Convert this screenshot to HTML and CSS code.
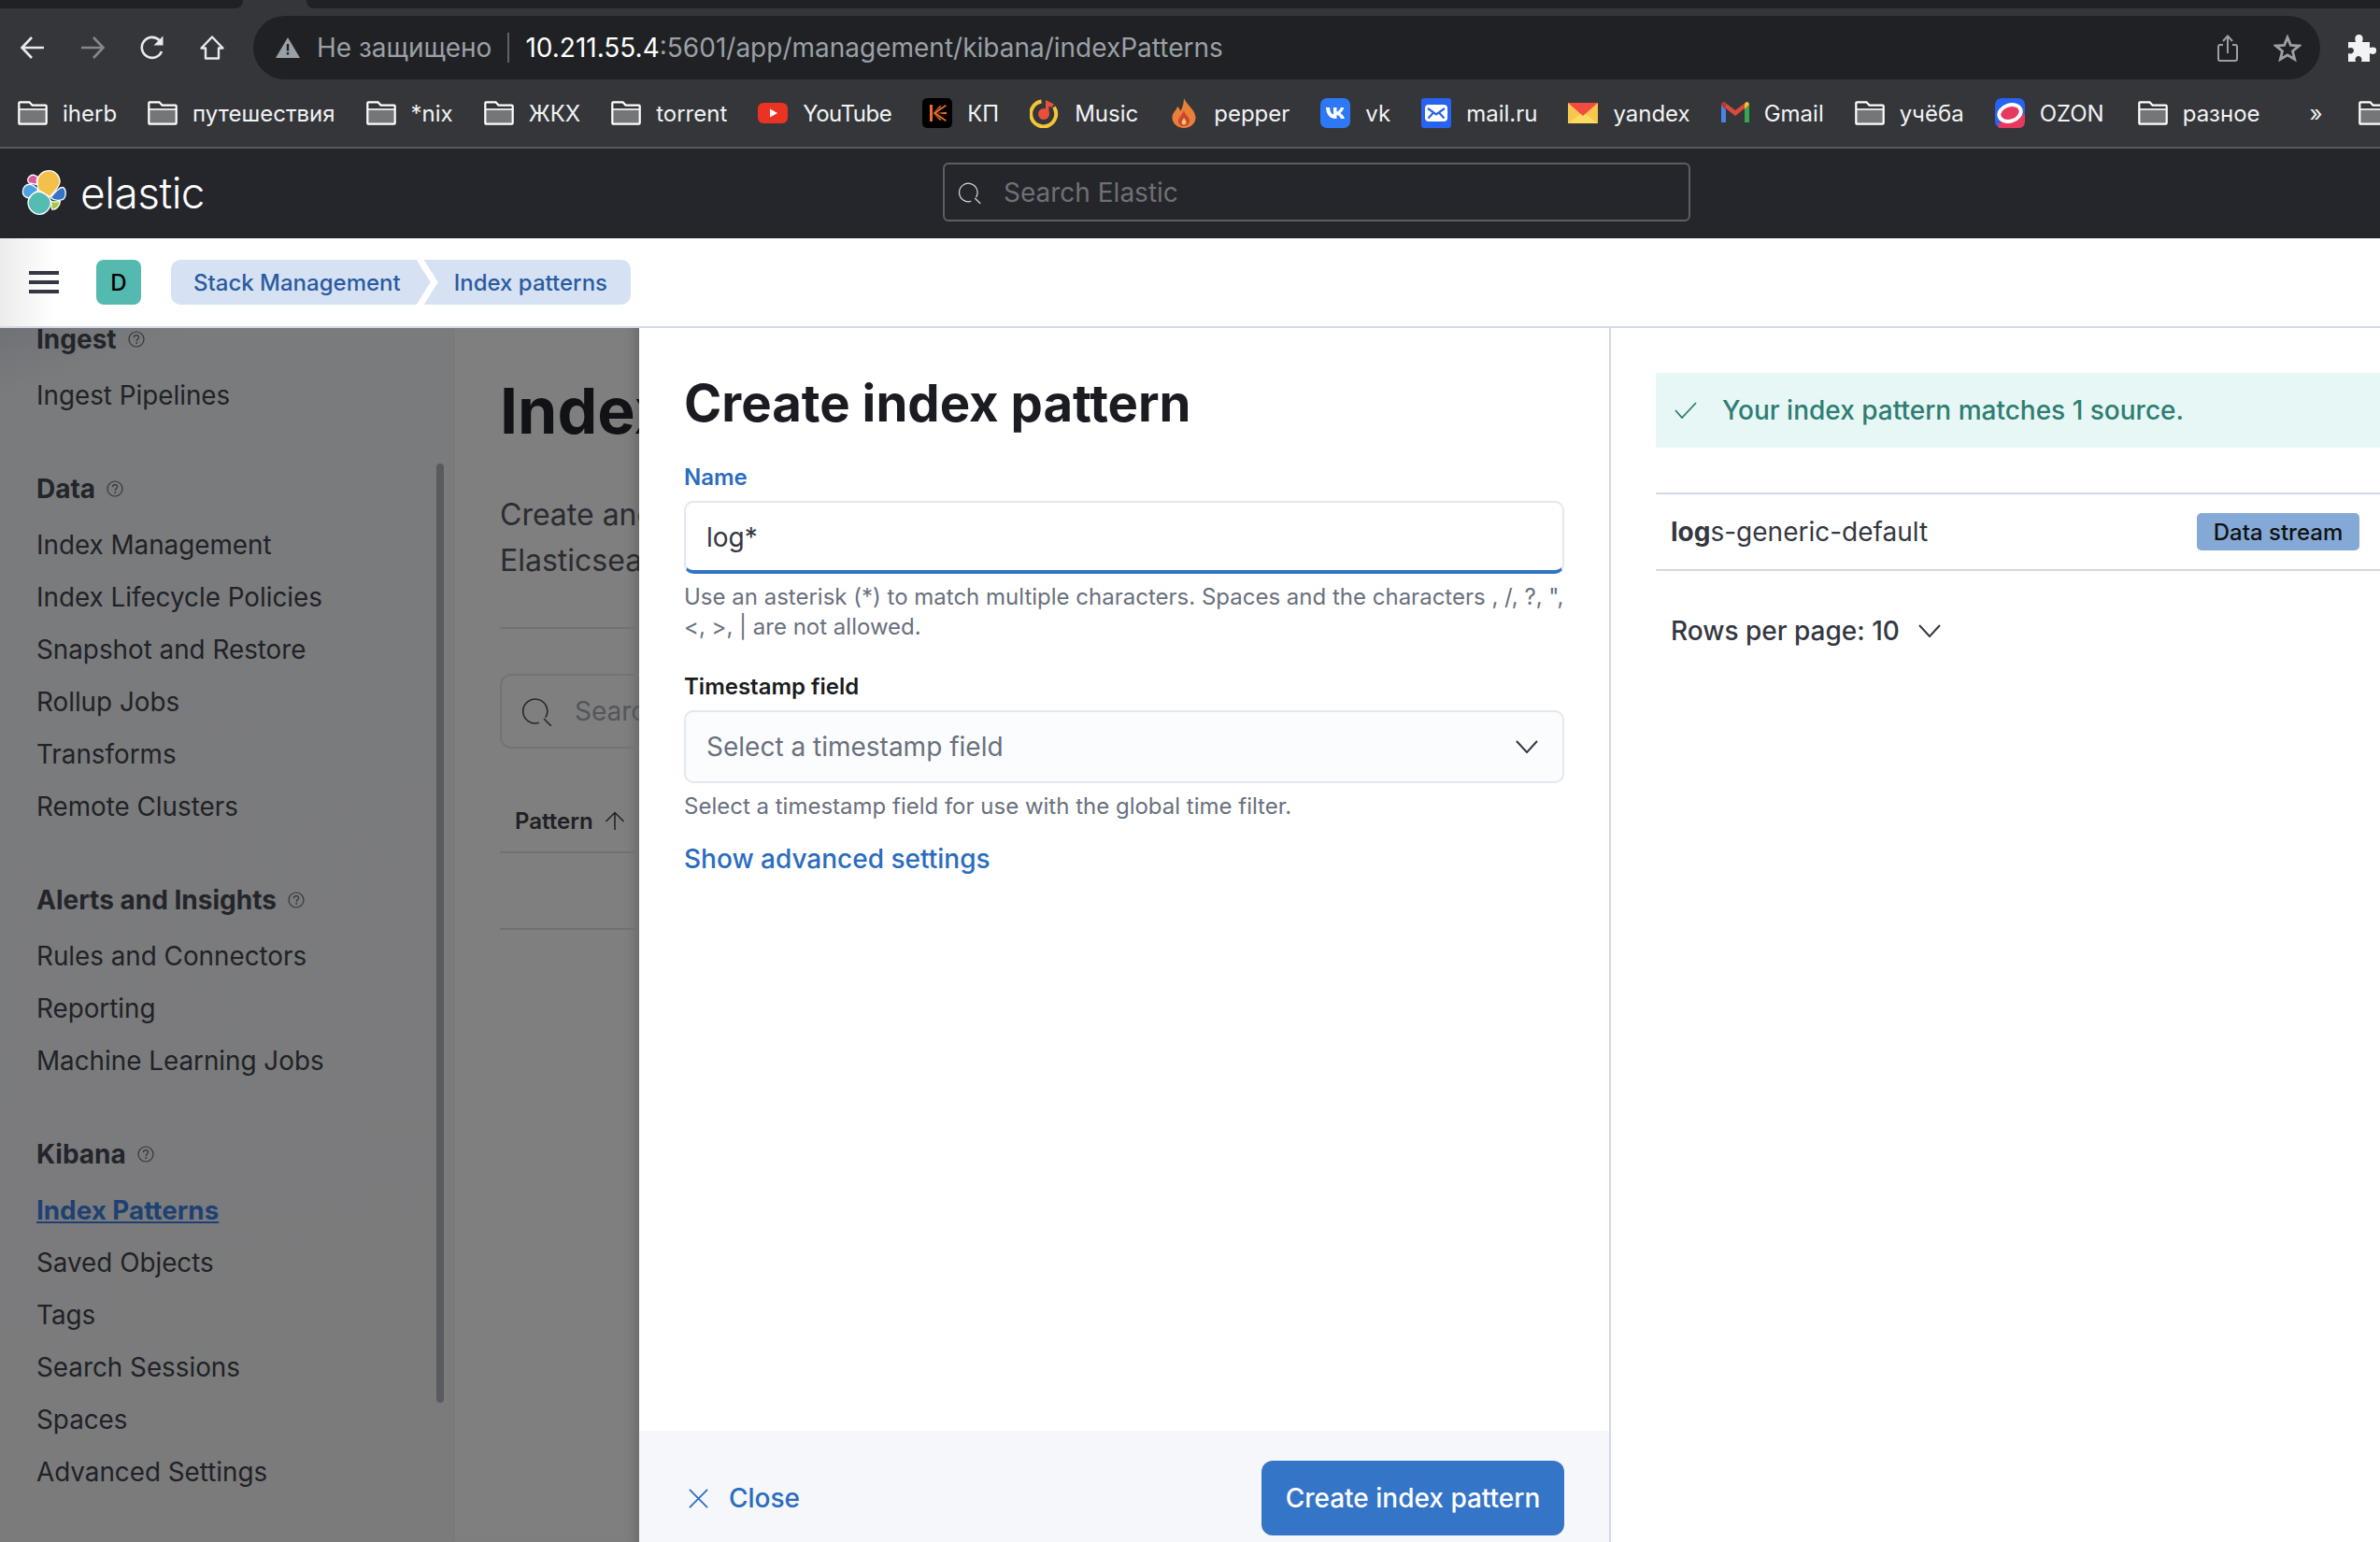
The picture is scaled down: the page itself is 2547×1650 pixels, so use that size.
FILE: index.html
```html
<!DOCTYPE html>
<html>
<head>
    <meta charset="utf-8">
    <meta name="viewport" content="width=device-width, initial-scale=1">
    <title>Index patterns - Elastic</title>
    <link rel="stylesheet" href="styles.css">
</head>
<body>
<svg class="defs" width="0" height="0">
    <symbol id="folder" viewBox="0 0 32 26">
        <path d="M1.3 9H30.7V24.7H1.3Z" fill="#757678"/>
        <path d="M1.3 9H30.7" stroke="#fff" stroke-width="1.6" fill="none"/>
        <path d="M1.3 2.4Q1.3 1.3 2.4 1.3H12.5L15.5 4.6H29.6Q30.7 4.6 30.7 5.7V23.6Q30.7 24.7 29.6 24.7H2.4Q1.3 24.7 1.3 23.6Z" stroke="#fff" stroke-width="2.2" fill="none"/>
    </symbol>
    <symbol id="help" viewBox="0 0 18 18">
        <circle cx="9" cy="9" r="8" stroke="#34363a" stroke-width="1.2" fill="none"/>
        <path d="M6.4 7.1C6.5 5.5 7.7 4.7 9 4.7C10.5 4.7 11.6 5.7 11.6 7C11.6 8.6 9.2 8.9 9.2 10.9" stroke="#34363a" stroke-width="1.2" fill="none"/>
        <circle cx="9.2" cy="13" r=".9" fill="#34363a"/>
    </symbol>
    <symbol id="chevron" viewBox="0 0 24 14">
        <path d="M1 1L12 13L23 1" stroke="currentColor" stroke-width="2" fill="none"/>
    </symbol>
    <symbol id="search" viewBox="0 0 32 32">
        <path d="M22 26.5A13 13 0 1 1 27 19" stroke="currentColor" stroke-width="1.6" fill="none" transform="rotate(18 14 14)"/>
        <path d="M23 24L31 32" stroke="currentColor" stroke-width="1.6"/>
    </symbol>
</svg>

<div class="tab-strip"><div class="tab-left"></div><div class="tab-right"></div></div>

<div class="toolbar">
    <div class="nav-btn"><svg class="nav-icon" viewBox="0 0 28 28"><path d="M26 14H3M13 3L2.5 14L13 25" stroke="#e8eaed" stroke-width="2.6" fill="none"/></svg></div>
    <div class="nav-btn"><svg class="nav-icon" viewBox="0 0 28 28"><path d="M2 14H25M15 3L25.5 14L15 25" stroke="#85878b" stroke-width="2.6" fill="none"/></svg></div>
    <div class="nav-btn"><svg class="nav-icon" viewBox="0 0 28 28"><path d="M24 18A11 11 0 1 1 21.5 6" stroke="#e8eaed" stroke-width="2.6" fill="none"/><path d="M25.5 1.5V11.5H15.5Z" fill="#e8eaed"/></svg></div>
    <div class="nav-btn"><svg class="nav-icon" viewBox="0 0 28 28"><path d="M14 2.5L25.5 14.5H21V25.5H7V14.5H2.5Z" stroke="#e8eaed" stroke-width="2.4" fill="none" stroke-linejoin="round"/></svg></div>
    <div class="omnibox">
        <svg class="warn-icon" viewBox="0 0 26 22"><path d="M13 0L26 22H0Z" fill="#9aa0a6"/><path d="M11.8 7H14.2V14.5H11.8ZM11.8 16H14.2V18.5H11.8Z" fill="#202124"/></svg>
        <span class="not-secure">Не защищено</span>
        <span class="omni-sep"></span>
        <span class="url"><span class="url-host">10.211.55.4</span>:5601/app/management/kibana/indexPatterns</span>
        <svg class="share-icon" viewBox="0 0 22 29"><path d="M6 11H3Q1 11 1 13V26Q1 28 3 28H19Q21 28 21 26V13Q21 11 19 11H16" stroke="#9aa0a6" stroke-width="2" fill="none"/><path d="M11 20V2M6 7L11 1.5L16 7" stroke="#9aa0a6" stroke-width="2" fill="none"/></svg>
        <svg class="star-icon" viewBox="0 0 30 29"><path d="M15 3L18.4 11.3L27.4 12L20.5 17.8L22.7 26.5L15 21.8L7.3 26.5L9.5 17.8L2.6 12L11.6 11.3Z" stroke="#9aa0a6" stroke-width="2.8" fill="none"/></svg>
    </div>
    <svg class="puzzle-icon" viewBox="0 0 30 29"><path d="M0 8H8C6 2 9 0 11.500 0C14 0 17 2 15 8H23V14C29 12 31 15.500 30 18C29.500 20.500 27 22 23 20V29H14C15.500 25 13 23 11 23C9 23 6.500 25 8 29H0V20C4 21.500 6 19 6 17C6 15 4 13 0 14.500Z" fill="#f1f3f4"/></svg>
</div>

<div class="bookmarks">
    <a class="bm"><svg class="bm-folder"><use href="#folder"/></svg>iherb</a>
    <a class="bm"><svg class="bm-folder"><use href="#folder"/></svg>путешествия</a>
    <a class="bm"><svg class="bm-folder"><use href="#folder"/></svg>*nix</a>
    <a class="bm"><svg class="bm-folder"><use href="#folder"/></svg>ЖКХ</a>
    <a class="bm"><svg class="bm-folder"><use href="#folder"/></svg>torrent</a>
    <a class="bm bm-tight"><svg class="bm-fav" viewBox="0 0 32 32"><rect x="0" y="5" width="32" height="22" rx="6" fill="#ea3323"/><path d="M13 11.500L21 16L13 20.500Z" fill="#fff"/></svg>YouTube</a>
    <a class="bm"><svg class="bm-fav" viewBox="0 0 32 32"><rect width="32" height="32" rx="5" fill="#000"/><path d="M8 7H11V25H8ZM11.500 16L25 7L25.800 8.500L15 16L26 14.800V17.200L15 16L25.800 23.500L25 25Z" fill="#f26f21"/><path d="M11.500 16L19 8L20.500 9ZM11.500 16L19 24L20.500 23Z" fill="#f26f21"/></svg>КП</a>
    <a class="bm"><svg class="bm-fav" viewBox="0 0 32 32"><path d="M12.500 3.500A13.500 13.500 0 1 0 26 9.500" stroke="#f4c534" stroke-width="4" fill="none"/><circle cx="15" cy="17" r="6" fill="#e8503a"/><path d="M17 17V2L26 6.500L23.500 10L20.500 8.500V17Z" fill="#e8503a"/></svg>Music</a>
    <a class="bm bm-pepper"><svg class="bm-flame" viewBox="0 0 26 32"><path d="M13 0C15 6 24 11 25.500 20C26 27 20 32 13 32C6 32 0 27 .5 20C1 15 5 13 6 9C8 11 9 12 9.500 14C11.500 10 13 5 13 0Z" fill="#e9803a"/><path d="M13 13C14 18 19 20 19 24C19 28 16 30 13 30C9.500 30 7 28 7 24.500C7 21 11 18 13 13Z" fill="#c9472e"/><path d="M13 21C14 23 15.500 24 15.500 26C15.500 27.500 14.500 28.500 13 28.500C11.500 28.500 10.500 27.500 10.500 26C10.500 24 12.500 23 13 21Z" fill="#f7c56b"/></svg>pepper</a>
    <a class="bm"><svg class="bm-fav" viewBox="0 0 32 32"><rect width="32" height="32" rx="7" fill="#2d78f4"/><path d="M6 10H10C10.300 15 12.300 17 14 17.500V10H17.500V14.500C19.300 14.300 21 12.300 21.800 10H25.300C24.700 13 22.700 15 21.300 16C22.700 16.800 25 18.500 26 22H22C21.200 19.800 19.500 18.200 17.500 18V22H16.800C10 22 6.300 17.500 6 10Z" fill="#fff"/></svg>vk</a>
    <a class="bm"><svg class="bm-fav" viewBox="0 0 32 32"><rect width="32" height="32" rx="3" fill="#2863ef"/><rect x="4" y="7" width="24" height="18" rx="4" fill="#fff"/><path d="M7 11L16 17.500L25 11M7.500 21.500L13 15.500M24.500 21.500L19 15.500" stroke="#2863ef" stroke-width="2.200" fill="none"/></svg>mail.ru</a>
    <a class="bm"><svg class="bm-fav" viewBox="0 0 32 32"><path d="M0 5H32V27H0Z" fill="#f6c64f"/><path d="M0 27L16 15L32 27Z" fill="#fbdc5e"/><path d="M0 5H32L16 19Z" fill="#f14c40"/></svg>yandex</a>
    <a class="bm bm-gmail"><svg class="bm-m" viewBox="0 0 30 32"><path d="M0 7V26H5V12Z" fill="#4a81ea"/><path d="M25 12V26H30V7Z" fill="#38a550"/><path d="M0 7L15 19L30 7L27 4L15 13L3 4Z" fill="#db4a3a"/><path d="M0 7Q0 4 3 4L5 6V12Z" fill="#b63a2e"/><path d="M30 7Q30 4 27 4L25 6V12Z" fill="#f2bd2f"/></svg>Gmail</a>
    <a class="bm"><svg class="bm-folder"><use href="#folder"/></svg>учёба</a>
    <a class="bm"><svg class="bm-fav" viewBox="0 0 32 32"><rect width="32" height="32" rx="7" fill="#2862f0"/><path d="M32 17V25Q32 32 25 32H4L3 27Z" fill="#e7385f"/><ellipse cx="16" cy="16" rx="12" ry="8.500" transform="rotate(-18 16 16)" fill="#e7385f" stroke="#fff" stroke-width="4"/></svg>OZON</a>
    <a class="bm bm-last"><svg class="bm-folder"><use href="#folder"/></svg>разное</a>
    <span class="bm-more">»</span>
    <span class="bm-sep"></span>
    <svg class="bm-folder"><use href="#folder"/></svg>
</div>

<header class="kbn-header">
    <div class="logo">
        <svg class="logo-mark" viewBox="0 0 210 210">
            <g stroke="#fff" stroke-width="4">
                <path d="M75 75C75 50 95 38 112 38C135 38 148 58 147 75C146 90 125 110 115 122L78 100C76 92 75 85 75 75Z" fill="#f3c14a"/>
                <path d="M44 68C44 58 55 50 65 52L76 58C72 66 73 72 73 82L50 78C46 76 44 72 44 68Z" fill="#d85b9c"/>
                <path d="M28 105C28 90 40 80 52 82C62 84 72 92 78 100L48 126C36 124 28 116 28 105Z" fill="#4ea1e4"/>
                <path d="M45 140C45 125 62 105 80 105C95 106 115 122 118 135C120 160 100 178 82 178C62 178 45 160 45 140Z" fill="#55bcb1"/>
                <path d="M118 125C128 110 148 88 158 92C168 98 168 120 160 128C152 135 130 135 118 125Z" fill="#3573c6"/>
                <path d="M118 135C128 140 140 138 148 136C148 150 135 165 122 162C120 155 120 145 118 135Z" fill="#a0c93f"/>
            </g>
        </svg>
        <span class="wordmark">elastic</span>
    </div>
    <div class="global-search">
        <svg class="global-search-icon"><use href="#search"/></svg>
        <span>Search Elastic</span>
    </div>
</header>

<nav class="kbn-nav">
    <div class="burger"><span></span><span></span><span></span></div>
    <div class="space-badge">D</div>
    <div class="crumbs">
        <a class="crumb crumb-first">Stack Management</a>
        <a class="crumb crumb-last">Index patterns</a>
    </div>
</nav>

<div class="workspace">
    <div class="dimmed">
        <aside class="sidebar">
            <div class="side-list">
                <div class="side-head">Ingest <svg class="help"><use href="#help"/></svg></div>
                <a class="side-item">Ingest Pipelines</a>
                <div class="side-head side-gap">Data <svg class="help"><use href="#help"/></svg></div>
                <a class="side-item">Index Management</a>
                <a class="side-item">Index Lifecycle Policies</a>
                <a class="side-item">Snapshot and Restore</a>
                <a class="side-item">Rollup Jobs</a>
                <a class="side-item">Transforms</a>
                <a class="side-item">Remote Clusters</a>
                <div class="side-head side-gap">Alerts and Insights <svg class="help"><use href="#help"/></svg></div>
                <a class="side-item">Rules and Connectors</a>
                <a class="side-item">Reporting</a>
                <a class="side-item">Machine Learning Jobs</a>
                <div class="side-head side-gap">Kibana <svg class="help"><use href="#help"/></svg></div>
                <a class="side-item side-active">Index Patterns</a>
                <a class="side-item">Saved Objects</a>
                <a class="side-item">Tags</a>
                <a class="side-item">Search Sessions</a>
                <a class="side-item">Spaces</a>
                <a class="side-item">Advanced Settings</a>
            </div>
            <div class="side-scroll"></div>
        </aside>
        <main class="page">
            <h1 class="page-title">Index patterns</h1>
            <p class="page-desc">Create and manage the index patterns that help you retrieve your data from<br>Elasticsearch.</p>
            <div class="page-rule"></div>
            <div class="page-search">
                <svg class="page-search-icon"><use href="#search"/></svg>
                <span>Search...</span>
            </div>
            <div class="page-th">
                <span>Pattern</span>
                <svg class="page-sort" viewBox="0 0 22 20"><path d="M11 20V2M1.500 11L11 1.500L20.500 11" stroke="#1f2023" stroke-width="1.500" fill="none"/></svg>
            </div>
            <div class="page-tr"></div>
        </main>
    </div>

    <section class="flyout">
        <div class="flyout-body">
            <h2 class="flyout-title">Create index pattern</h2>
            <label class="field-label field-label-on">Name</label>
            <div class="field field-name">log*</div>
            <p class="field-help">Use an asterisk (*) to match multiple characters. Spaces and the characters , /, ?, ",<br>&lt;, &gt;, | are not allowed.</p>
            <label class="field-label field-label-second">Timestamp field</label>
            <div class="field field-select">
                <span>Select a timestamp field</span>
                <svg class="select-chevron"><use href="#chevron"/></svg>
            </div>
            <p class="field-help">Select a timestamp field for use with the global time filter.</p>
            <a class="advanced-link">Show advanced settings</a>
        </div>
        <div class="flyout-foot">
            <a class="close-link">
                <svg class="close-icon" viewBox="0 0 22 22"><path d="M1 1L21 21M21 1L1 21" stroke="#2a6cc0" stroke-width="1.800"/></svg>
                Close
            </a>
            <button class="create-btn">Create index pattern</button>
        </div>
    </section>

    <section class="matches">
        <div class="callout">
            <svg class="callout-icon" viewBox="0 0 24 18"><path d="M1 9L8 17L23 1" stroke="#2f7d72" stroke-width="1.800" fill="none"/></svg>
            <span>Your index pattern matches 1 source.</span>
        </div>
        <div class="match-row">
            <span><b>log</b>s-generic-default</span>
            <span class="badge">Data stream</span>
        </div>
        <div class="rows-per-page">
            <span>Rows per page: 10</span>
            <svg class="rows-chevron"><use href="#chevron"/></svg>
        </div>
    </section>
</div>
</body>
</html>
```

FILE: styles.css
```css
* {
    box-sizing: border-box;
}

html, body {
    margin: 0;
    height: 1650px;
    overflow: hidden;
}

body {
    font-family: Inter, "Noto Sans", sans-serif;
    background: #fff;
    color: #343741;
    display: flex;
    flex-direction: column;
}

.defs {
    position: absolute;
}

/* browser chrome */
.tab-strip {
    height: 9px;
    background: #35363a;
    display: flex;
    gap: 68px;
}

.tab-left {
    width: 260px;
    background: #202124;
    border-bottom-right-radius: 8px;
}

.tab-right {
    flex: 1;
    background: #202124;
    border-bottom-left-radius: 8px;
}

.toolbar {
    height: 76px;
    background: #35363a;
    padding: 8px 0 0 3px;
    display: flex;
    align-items: flex-start;
}

.nav-btn {
    width: 64px;
    height: 68px;
    display: flex;
    align-items: center;
    justify-content: center;
}

.nav-icon {
    width: 28px;
    height: 28px;
}

.omnibox {
    flex: 1;
    height: 68px;
    margin-left: 12px;
    background: #202124;
    border-radius: 34px;
    display: flex;
    align-items: center;
    padding-left: 24px;
    font-size: 28px;
}

.warn-icon {
    width: 26px;
    height: 22px;
}

.not-secure {
    margin-left: 18px;
    color: #9aa0a6;
}

.omni-sep {
    width: 2px;
    height: 32px;
    background: #5f6368;
    margin: 0 17px;
}

.url {
    color: #9aa0a6;
    flex: 1;
}

.url-host {
    color: #fff;
}

.share-icon {
    width: 22px;
    height: 29px;
}

.star-icon {
    width: 30px;
    height: 29px;
    margin: 0 20px 0 38px;
}

.puzzle-icon {
    width: 30px;
    height: 29px;
    margin: 20px 4px 0 30px;
    flex: none;
}

.bookmarks {
    height: 74px;
    background: #35363a;
    border-bottom: 2px solid #58595c;
    padding-left: 19px;
    display: flex;
    align-items: center;
    gap: 33px;
    font-size: 24px;
    color: #f1f3f4;
    white-space: nowrap;
}

.bm {
    display: flex;
    align-items: center;
    gap: 16px;
}

.bm-tight {
    letter-spacing: -.5px;
}

.bm-last {
    margin-left: 3px;
}

.bm-folder {
    width: 32px;
    height: 26px;
    flex: none;
}

.bm-fav {
    width: 32px;
    height: 32px;
}

.bm-flame {
    width: 26px;
    height: 32px;
}

.bm-pepper {
    gap: 19px;
    margin-left: 3px;
}

.bm-m {
    width: 30px;
    height: 32px;
}

.bm-more {
    margin-left: 20px;
}

.bm-sep {
    width: 2px;
    height: 32px;
    background: #6a6b6e;
    margin: 0 -14px;
}

/* kibana header */
.kbn-header {
    height: 96px;
    background: #25262b;
    display: grid;
    grid-template-columns: 1009px 800px 1fr;
    align-items: center;
}

.logo {
    display: flex;
    align-items: center;
    padding-left: 15px;
    gap: 1px;
}

.logo-mark {
    width: 70px;
    height: 70px;
    margin-top: -4px;
}

.wordmark {
    font-size: 46px;
    font-weight: 300;
    color: #fff;
    letter-spacing: -.5px;
    margin-top: -3px;
}

.global-search {
    height: 63px;
    margin-top: -3px;
    border: 2px solid #5e5f63;
    border-radius: 6px;
    display: flex;
    align-items: center;
    padding-left: 15px;
    gap: 24px;
    font-size: 28px;
    color: #6f7074;
}

.global-search-icon {
    width: 24px;
    height: 24px;
    color: #d8d8da;
}

/* breadcrumb bar */
.kbn-nav {
    height: 96px;
    border-bottom: 2px solid #d3dae6;
    background: linear-gradient(90deg, #ececec 0, #fff 60px);
    display: flex;
    align-items: center;
    padding-left: 31px;
}

.burger {
    width: 32px;
    display: flex;
    flex-direction: column;
    gap: 6px;
    margin-right: 40px;
}

.burger span {
    height: 4px;
    background: #343741;
}

.space-badge {
    width: 48px;
    height: 48px;
    border-radius: 8px;
    background: #54b9ae;
    color: #000;
    font-size: 24px;
    font-weight: 500;
    display: flex;
    align-items: center;
    justify-content: center;
    margin-right: 32px;
}

.crumbs {
    display: flex;
}

.crumb {
    height: 48px;
    background: #d6e2f4;
    color: #2a5b9f;
    font-size: 24px;
    font-weight: 500;
    display: flex;
    align-items: center;
    white-space: nowrap;
}

.crumb-first {
    padding: 0 32px 0 24px;
    border-radius: 10px 0 0 10px;
    clip-path: polygon(0 0, calc(100% - 15px) 0, 100% 50%, calc(100% - 15px) 100%, 0 100%);
}

.crumb-last {
    margin-left: -7px;
    padding: 0 25px 0 32px;
    border-radius: 0 10px 10px 0;
    clip-path: polygon(0 0, 100% 0, 100% 100%, 0 100%, 15px 50%);
}

/* dimmed page behind the flyout */
.workspace {
    flex: 1;
    display: flex;
    min-height: 0;
}

.dimmed {
    width: 684px;
    flex: none;
    display: flex;
    overflow: hidden;
    background: #7f7f7f;
    box-shadow: inset -14px 0 12px -10px #6a6a6a;
}

.sidebar {
    width: 487px;
    flex: none;
    position: relative;
    overflow: hidden;
    padding-left: 39px;
    background: linear-gradient(160deg, #6f7276 0, #7a7b7d 70px, #7b7b7c 100%);
    border-right: 2px solid #797a7b;
}

.side-list {
    margin-top: -20px;
}

.side-head {
    height: 64px;
    display: flex;
    align-items: center;
    gap: 12px;
    font-size: 28px;
    font-weight: 700;
    color: #23252a;
}

.side-gap {
    margin-top: 40px;
}

.help {
    width: 18px;
    height: 18px;
}

.side-item {
    height: 56px;
    display: flex;
    align-items: center;
    font-size: 27.800px;
    color: #202226;
    white-space: nowrap;
}

.side-active {
    color: #1d4173;
    font-weight: 700;
    text-decoration: underline;
}

.side-scroll {
    position: absolute;
    top: 145px;
    right: 10px;
    width: 8px;
    height: 1005px;
    border-radius: 4px;
    background: #5a5b5e;
}

.page {
    flex: 1;
    min-width: 0;
    overflow: hidden;
    padding: 48px 0 0 48px;
    white-space: nowrap;
}

.page-title {
    margin: 0;
    font-size: 68px;
    line-height: 80px;
    font-weight: 700;
    color: #111215;
}

.page-desc {
    margin: 47px 0 0;
    font-size: 32px;
    line-height: 49px;
    color: #2a2c30;
}

.page-rule {
    width: 600px;
    height: 2px;
    margin-top: 47px;
    background: #6f7175;
}

.page-search {
    width: 600px;
    height: 80px;
    margin-top: 48px;
    border: 2px solid #717378;
    border-radius: 12px;
    display: flex;
    align-items: center;
    padding-left: 22px;
    gap: 24px;
    font-size: 28px;
    color: #53565b;
}

.page-search-icon {
    width: 32px;
    height: 32px;
    color: #26282c;
}

.page-th {
    width: 600px;
    height: 68px;
    margin-top: 44px;
    padding-left: 16px;
    border-bottom: 2px solid #6f7175;
    display: flex;
    align-items: center;
    gap: 12px;
    font-size: 24px;
    font-weight: 600;
    color: #1f2023;
}

.page-sort {
    width: 22px;
    height: 20px;
}

.page-tr {
    width: 600px;
    height: 82px;
    border-bottom: 2px solid #6f7175;
}

/* flyout */
.flyout {
    width: 1040px;
    flex: none;
    border-right: 2px solid #d3dae6;
    display: flex;
    flex-direction: column;
}

.flyout-body {
    flex: 1;
    padding: 48px 48px 0;
}

.flyout-title {
    margin: 0 0 32px;
    font-size: 54.500px;
    line-height: 64px;
    font-weight: 700;
    color: #1a1c21;
}

.field-label {
    display: block;
    font-size: 24px;
    line-height: 32px;
    font-weight: 600;
    color: #1a1c21;
    margin-bottom: 9px;
}

.field-label-on {
    color: #2a6cc0;
}

.field-label-second {
    margin-top: 32px;
}

.field {
    height: 78px;
    border: 2px solid #e3e7ef;
    border-radius: 10px;
    display: flex;
    align-items: center;
    padding: 0 22px;
    font-size: 28px;
}

.field-name {
    border-bottom: 4px solid #3273c6;
    color: #343741;
    padding-top: 2px;
}

.field-select {
    background: #fbfcfd;
    color: #69707d;
    justify-content: space-between;
}

.select-chevron {
    width: 24px;
    height: 14px;
    color: #343741;
    margin-right: 4px;
}

.field-help {
    margin: 9px 0 0;
    font-size: 24px;
    line-height: 32px;
    color: #69707d;
    white-space: nowrap;
}

.advanced-link {
    display: block;
    margin-top: 22px;
    font-size: 28px;
    line-height: 36px;
    font-weight: 500;
    color: #2a6cc0;
}

.flyout-foot {
    height: 119px;
    background: #f5f7fa;
    padding: 32px 48px 0 53px;
    display: flex;
    justify-content: space-between;
    align-items: flex-start;
}

.close-link {
    height: 80px;
    display: flex;
    align-items: center;
    gap: 22px;
    font-size: 28px;
    font-weight: 500;
    color: #2a6cc0;
}

.close-icon {
    width: 21px;
    height: 21px;
}

.create-btn {
    width: 324px;
    height: 80px;
    border: none;
    border-radius: 12px;
    background: #3575c8;
    color: #fff;
    font-family: inherit;
    font-size: 28px;
    font-weight: 500;
    padding: 0;
}

/* matching sources */
.matches {
    flex: 1;
    min-width: 0;
    padding: 48px 0 0 48px;
    font-size: 28px;
}

.callout {
    height: 80px;
    background: #e6f7f5;
    color: #2f7d72;
    display: flex;
    align-items: center;
    padding-left: 20px;
    gap: 27px;
    font-weight: 500;
}

.callout-icon {
    width: 24px;
    height: 18px;
}

.match-row {
    height: 84px;
    margin-top: 48px;
    border-top: 2px solid #d3dae6;
    border-bottom: 2px solid #d3dae6;
    padding: 0 22px 0 16px;
    display: flex;
    align-items: center;
    justify-content: space-between;
}

.badge {
    width: 174px;
    height: 40px;
    border-radius: 5px;
    background: #84a9d6;
    color: #111;
    font-size: 24px;
    font-weight: 500;
    display: flex;
    align-items: center;
    justify-content: center;
}

.rows-per-page {
    margin-top: 46px;
    padding-left: 16px;
    height: 36px;
    display: flex;
    align-items: center;
    gap: 20px;
    font-weight: 500;
}

.rows-chevron {
    width: 24px;
    height: 14px;
}
```
